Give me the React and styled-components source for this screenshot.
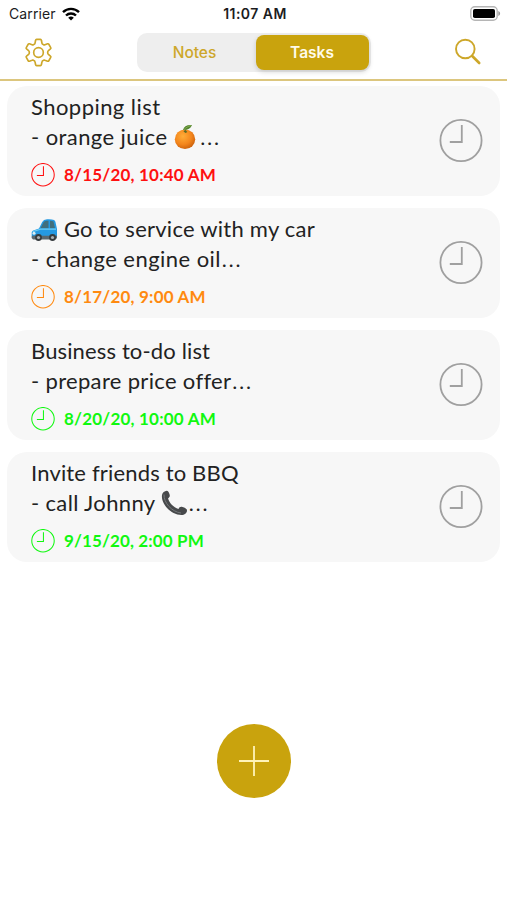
import React from 'react';
import styled, { createGlobalStyle } from 'styled-components';

const GlobalStyle = createGlobalStyle`
  * {
    box-sizing: border-box;
  }

  body {
    margin: 0;
    background-color: #ffffff;
  }
`;

const Screen = styled.div`
  display: flex;
  flex-direction: column;
  width: 507px;
  height: 900px;
  overflow: hidden;
  background-color: #ffffff;
  color: #222222;
  font-family: Lato, 'Liberation Sans', sans-serif;
`;

const StatusBar = styled.div`
  display: grid;
  grid-template-columns: 1fr auto 1fr;
  align-items: center;
  height: 27px;
  padding: 0 6px 0 9px;
  color: #1c1c1e;
  font-family: Inter, 'Liberation Sans', sans-serif;
  font-size: 14px;
`;

const Carrier = styled.div`
  display: flex;
  align-items: center;
  gap: 6px;
  letter-spacing: 0.1px;
`;

const Time = styled.div`
  font-weight: 600;
  letter-spacing: 0.45px;
`;

const Battery = styled.div`
  display: flex;
  justify-content: flex-end;
`;

const NavBar = styled.div`
  display: flex;
  align-items: center;
  justify-content: space-between;
  height: 54px;
  padding: 0 25px 2px 22px;
  border-bottom: 2px solid #dcc67e;
`;

const IconButton = styled.button`
  display: flex;
  padding: 0;
  border: none;
  background: none;
  color: #cda72a;
`;

const Segmented = styled.div`
  display: flex;
  width: 234px;
  height: 39px;
  margin-right: 2px;
  padding: 2px;
  border-radius: 10px;
  background-color: #eeeeee;
`;

const Segment = styled.button`
  flex: ${(props) => (props.$active ? '0 0 113px' : '1')};
  padding: ${(props) => (props.$active ? '0' : '0 5px 0 0')};
  border: none;
  border-radius: 8px;
  background-color: ${(props) => (props.$active ? '#c9a30d' : 'transparent')};
  color: ${(props) => (props.$active ? '#fffbea' : '#cda72a')};
  box-shadow: ${(props) => (props.$active ? '0 2px 5px rgba(0, 0, 0, 0.16)' : 'none')};
  font-family: Inter, 'Liberation Sans', sans-serif;
  font-size: 15.5px;
  font-weight: ${(props) => (props.$active ? 600 : 500)};
`;

const TaskList = styled.div`
  display: flex;
  flex-direction: column;
  gap: 12px;
  padding: 5px 7px 0;
`;

const TaskCard = styled.div`
  display: flex;
  align-items: center;
  justify-content: space-between;
  height: 110px;
  padding: 0 17px 0 24px;
  border-radius: 20px;
  background-color: #f7f7f7;
`;

const TaskBody = styled.div`
  display: flex;
  flex-direction: column;
  height: 100%;
  padding-top: 6px;
`;

const TaskLine = styled.div`
  display: flex;
  align-items: center;
  height: 30px;
  font-size: 22px;
  line-height: 30px;
  letter-spacing: ${(props) => props.$spacing}px;
  white-space: pre;
`;

const Ellipsis = styled.span`
  margin-left: ${(props) => props.$gap || 0}px;
  padding-bottom: 6px;
  font-size: 28px;
  font-weight: 300;
  line-height: 24px;
`;

const DueDate = styled.div`
  display: flex;
  align-items: center;
  gap: 9px;
  height: 24px;
  margin-top: 11px;
  color: ${(props) => props.$color};
  font-size: 17px;
  font-weight: 700;
  letter-spacing: ${(props) => props.$spacing}px;
`;

const DueText = styled.span`
  padding-bottom: 2px;
`;

const Footer = styled.div`
  display: flex;
  justify-content: center;
  margin-top: 162px;
`;

const AddButton = styled.button`
  display: flex;
  align-items: center;
  justify-content: center;
  width: 74px;
  height: 74px;
  padding: 0;
  border: none;
  border-radius: 50%;
  background-color: #c9a30d;
`;

const WifiIcon = () => (
  <svg width="18" height="14" viewBox="0 0 18 14" fill="none" stroke="#000000" strokeWidth="2.4">
    <path d="M1 5.2a11.4 11.4 0 0 1 16 0" />
    <path d="M4 8.5a7.2 7.2 0 0 1 10 0" />
    <path d="M9 13.6 6.2 10.8a4 4 0 0 1 5.6 0z" fill="#000000" stroke="none" />
  </svg>
);

const BatteryIcon = () => (
  <svg width="31" height="15" viewBox="0 0 31 15">
    <rect x="0.8" y="0.8" width="26.4" height="13.4" rx="4" fill="#ffffff" stroke="#b5b5b5" strokeWidth="1.4" />
    <rect x="3" y="3" width="22" height="9" rx="1.8" fill="#000000" />
    <path d="M28.3 5c1.2.5 1.8 1.4 1.8 2.5s-.6 2-1.8 2.5z" fill="#999999" />
  </svg>
);

const GearIcon = () => (
  <svg width="33" height="33" viewBox="0 0 24 24" fill="none" stroke="currentColor" strokeWidth="1.2" strokeLinejoin="round">
    <path d="M10.6 2.5h2.8q.6 0 .7.6l.4 2q.1.6.6.9l.5.3q.6.3 1.1.1l1.9-.7q.6-.2.9.3l1.4 2.4q.3.5-.2.9l-1.5 1.3q-.5.4-.5 1v.8q0 .6.5 1l1.5 1.3q.5.4.2.9l-1.4 2.4q-.3.5-.9.3l-1.9-.7q-.5-.2-1.1.1l-.5.3q-.5.3-.6.9l-.4 2q-.1.6-.7.6h-2.8q-.6 0-.7-.6l-.4-2q-.1-.6-.6-.9l-.5-.3q-.6-.3-1.1-.1l-1.9.7q-.6.2-.9-.3l-1.4-2.4q-.3-.5.2-.9l1.5-1.3q.5-.4.5-1v-.8q0-.6-.5-1L3.3 9.3q-.5-.4-.2-.9L4.5 6q.3-.5.9-.3l1.9.7q.5.2 1.1-.1l.5-.3q.5-.3.6-.9l.4-2q.1-.6.7-.6z" />
    <circle cx="12" cy="12" r="3.5" />
  </svg>
);

const SearchIcon = () => (
  <svg width="28" height="28" viewBox="0 0 28 28" fill="none" stroke="currentColor" strokeLinecap="round">
    <circle cx="11.3" cy="11" r="9.3" strokeWidth="1.9" />
    <path d="M18.2 18l7 7" strokeWidth="2.6" />
  </svg>
);

const ClockIcon = ({ size, color = 'currentColor', stroke }) => (
  <svg width={size} height={size} viewBox="0 0 44 44" fill="none" stroke={color} strokeWidth={stroke}>
    <circle cx="22" cy="21.5" r="20.6" />
    <path d="M22.8 6v17h-12" />
  </svg>
);

const PlusIcon = () => (
  <svg width="30" height="30" viewBox="0 0 30 30" stroke="#fff3b8" strokeWidth="1.8">
    <path d="M15 0v30M0 15h30" />
  </svg>
);

const OrangeIcon = () => (
  <svg width="22" height="26" viewBox="0 0 22 26">
    <defs>
      <radialGradient id="orangeSkin" cx="0.4" cy="0.35" r="0.7">
        <stop offset="0" stopColor="#ffad38" />
        <stop offset="0.6" stopColor="#f3851c" />
        <stop offset="1" stopColor="#c95f0b" />
      </radialGradient>
    </defs>
    <ellipse cx="11" cy="15.2" rx="10.2" ry="9.8" fill="url(#orangeSkin)" />
    <path d="M9.5 7.5l1.8-1.8 2 2.4-1.7 1z" fill="#5b6b25" />
    <path d="M9 6C10 2 13 .6 18 1c-1.3 3.5-4.5 5.3-9 5z" fill="#55852f" />
    <path d="M10 5.6C12 3.5 14 2.4 17 1.5" stroke="#8cb558" strokeWidth="0.8" fill="none" />
  </svg>
);

const CarIcon = () => (
  <svg width="27" height="26" viewBox="0 -2 27 26">
    <path d="M.7 19.5V14.5q0-1.5 1.6-2L8 10.5 11.2 4Q12.5 1.5 16 1.3q4.5-.3 7 .7 1 .5 1.4 1.7L26 11v8.5L24 21H3z" fill="#2599e2" />
    <path d="M9.5 10.3 12.5 4.5Q13.3 3 15.5 2.8l2-.1v7.6z" fill="#416f7d" />
    <path d="M19 2.7q2.3 0 3.5.7l1.5 6.9h-5z" fill="#416f7d" />
    <path d="M1.5 13.8 9.5 11.2H25" stroke="#6bcdf5" strokeWidth="1.2" fill="none" />
    <path d="M1 17.8h25V20l-1.5 1.5H2L.7 20z" fill="#5a6870" />
    <circle cx="3" cy="15.2" r="1.5" fill="#dceff5" />
    <circle cx="7.5" cy="19.5" r="3.4" fill="#363b3e" />
    <circle cx="7.5" cy="19.5" r="1.6" fill="#a8b0b4" />
    <circle cx="21.5" cy="19.5" r="3.4" fill="#363b3e" />
    <circle cx="21.5" cy="19.5" r="1.6" fill="#a8b0b4" />
  </svg>
);

const PhoneIcon = () => (
  <svg width="27" height="26" viewBox="0 0 27 26">
    <path
      d="M1 5C1.5 2.5 3.5 1 5.7.8c1.3 0 2.3 1.5 2.9 3.7.5 1.8 0 2.7-1.5 3.7C8 12.5 12.5 17.5 17.5 19c.8-2 2-2.7 4-2.1 2.5.7 4.5 2 4.5 3.5 0 2.6-2.5 4.6-5.5 4.6C9.5 24.8-.2 13.5 1 5z"
      fill="#47494b"
    />
    <path d="M3 4.5C2.7 12.5 10.5 21.8 20 23" stroke="#777a7c" strokeWidth="1" fill="none" />
  </svg>
);

const tasks = [
  {
    title: <span>Shopping list</span>,
    note: (
      <>
        <span>- orange juice </span>
        <OrangeIcon />
        <Ellipsis $gap={4}>…</Ellipsis>
      </>
    ),
    due: '8/15/20, 10:40 AM',
    color: '#ff1010',
    spacing: [0.45, 0.42, 0.2],
  },
  {
    title: (
      <>
        <CarIcon />
        <span> Go to service with my car</span>
      </>
    ),
    note: (
      <>
        <span>- change engine oil</span>
        <Ellipsis>…</Ellipsis>
      </>
    ),
    due: '8/17/20, 9:00 AM',
    color: '#ff8a10',
    spacing: [0.25, 0.45, 0.2],
  },
  {
    title: <span>Business to-do list</span>,
    note: (
      <>
        <span>- prepare price offer</span>
        <Ellipsis>…</Ellipsis>
      </>
    ),
    due: '8/20/20, 10:00 AM',
    color: '#10f810',
    spacing: [0.14, 0.33, 0.2],
  },
  {
    title: <span>Invite friends to BBQ</span>,
    note: (
      <>
        <span>- call Johnny </span>
        <PhoneIcon />
        <Ellipsis>…</Ellipsis>
      </>
    ),
    due: '9/15/20, 2:00 PM',
    color: '#10f810',
    spacing: [0.17, 0.35, 0.12],
  },
];

const App = () => {
  return (
    <>
      <GlobalStyle />
      <Screen>
        <StatusBar>
          <Carrier>
            Carrier
            <WifiIcon />
          </Carrier>
          <Time>11:07 AM</Time>
          <Battery>
            <BatteryIcon />
          </Battery>
        </StatusBar>

        <NavBar>
          <IconButton aria-label="Settings">
            <GearIcon />
          </IconButton>
          <Segmented>
            <Segment>Notes</Segment>
            <Segment $active>Tasks</Segment>
          </Segmented>
          <IconButton aria-label="Search">
            <SearchIcon />
          </IconButton>
        </NavBar>

        <TaskList>
          {tasks.map((task) => (
            <TaskCard key={task.due}>
              <TaskBody>
                <TaskLine $spacing={task.spacing[0]}>{task.title}</TaskLine>
                <TaskLine $spacing={task.spacing[1]}>{task.note}</TaskLine>
                <DueDate $color={task.color} $spacing={task.spacing[2]}>
                  <ClockIcon size={24} stroke={1.9} />
                  <DueText>{task.due}</DueText>
                </DueDate>
              </TaskBody>
              <ClockIcon size={44} color="#a0a0a0" stroke={1.8} />
            </TaskCard>
          ))}
        </TaskList>

        <Footer>
          <AddButton aria-label="Add task">
            <PlusIcon />
          </AddButton>
        </Footer>
      </Screen>
    </>
  );
};

export default App;
